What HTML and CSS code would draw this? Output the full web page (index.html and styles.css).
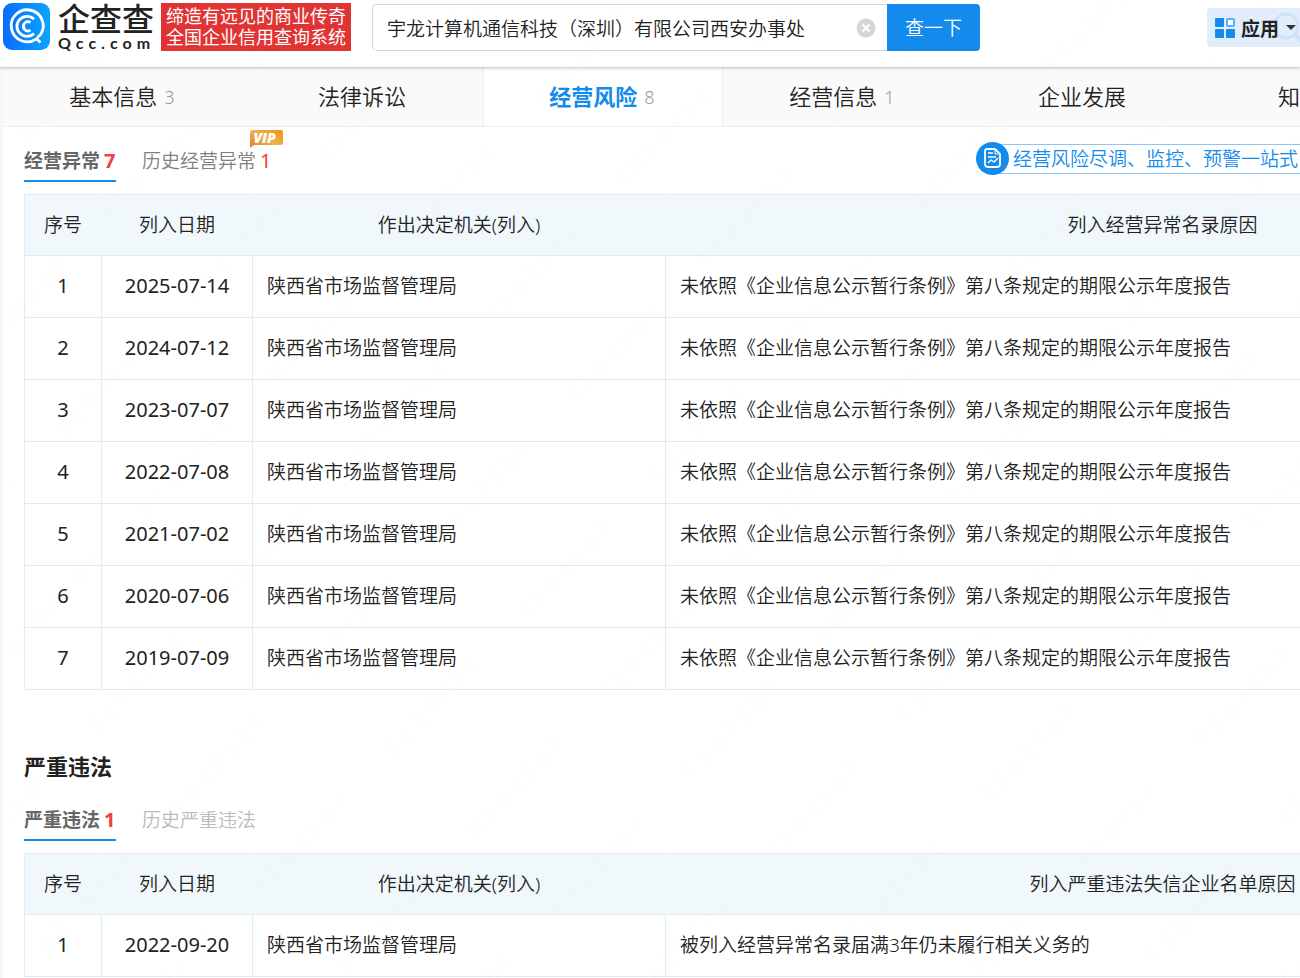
FILE: index.html
```
<!DOCTYPE html>
<html lang="zh-CN">
<head>
  <meta charset="UTF-8" />
  <meta name="viewport" content="width=device-width, initial-scale=1.0"/>
  <title>宇龙计算机通信科技（深圳）有限公司西安办事处 - 企查查</title>
  <link rel="stylesheet" href="styles.css">
</head>
<body>
  <header class="header">
    <a class="logo" href="#">
      <svg class="logo-icon" viewBox="0 0 47 47" aria-hidden="true">
        <defs>
          <linearGradient id="logoBg" x1="0" y1="0" x2="1" y2="0">
            <stop offset="0" stop-color="#0a6cff"/>
            <stop offset="1" stop-color="#0aa5ff"/>
          </linearGradient>
        </defs>
        <rect width="47" height="47" rx="9" fill="url(#logoBg)"/>
        <g fill="none" stroke="#fff" stroke-width="2.800">
          <path d="M37.500 39.500L33.500 35.800A16 16 0 1 1 37.800 31.200L34.500 34.500"/>
          <path d="M31 16.200A10 10 0 1 0 31 30.400"/>
          <path d="M27.500 19.500A4.600 4.600 0 1 0 27.500 27.200"/>
        </g>
      </svg>
      <span class="logo-text">
        <span class="logo-cn">企查查</span>
        <span class="logo-en">Qcc.com</span>
      </span>
    </a>
    <div class="slogan">缔造有远见的商业传奇<br>全国企业信用查询系统</div>

    <form class="search">
      <div class="search-box">
        <input type="text" aria-label="搜索企业" value="宇龙计算机通信科技（深圳）有限公司西安办事处">
        <button type="button" class="clear" aria-label="清空">
          <svg viewBox="0 0 20 20"><circle cx="10" cy="10" r="9.500" fill="#d6d6d6"/><path d="M6.500 6.500l7 7M13.500 6.500l-7 7" stroke="#fff" stroke-width="2"/></svg>
        </button>
      </div>
      <button type="button" class="search-btn">查一下</button>
    </form>

    <button type="button" class="apps">
      <svg class="apps-search" viewBox="0 0 32 32" aria-hidden="true"><circle cx="14" cy="14" r="12" fill="none" stroke="#cfe2fa" stroke-width="3"/><path d="M22 22l8 8" stroke="#cfe2fa" stroke-width="4"/></svg>
      <svg class="apps-icon" viewBox="0 0 20 20" aria-hidden="true">
        <g fill="#128bed">
          <rect width="9" height="9" rx="1"/>
          <rect y="11" width="9" height="9" rx="1"/>
          <rect x="11" y="11" width="9" height="9" rx="1"/>
        </g>
        <rect x="12" y="1" width="7" height="7" rx="1" fill="#fff" stroke="#5aaef2" stroke-width="2"/>
      </svg>
      <span>应用</span>
      <svg class="caret" viewBox="0 0 10 6" aria-hidden="true"><path d="M0 0h10L5 5z" fill="#333"/></svg>
    </button>
  </header>

  <main class="page">
    <nav class="tabs">
      <a href="#">基本信息<em>3</em></a>
      <a href="#">法律诉讼</a>
      <a href="#" class="active">经营风险<em>8</em></a>
      <a href="#">经营信息<em>1</em></a>
      <a href="#">企业发展</a>
      <a href="#">知识产权</a>
    </nav>

    <section class="panel">
      <div class="sub-tabs">
        <a href="#" class="current">经营异常<b>7</b></a>
        <a href="#">历史经营异常<b>1</b>
          <span class="vip">
            <svg viewBox="0 0 34 18" aria-hidden="true">
              <defs>
                <linearGradient id="vipBg" x1="0" y1="1" x2="1" y2="0">
                  <stop offset="0" stop-color="#d9822b"/>
                  <stop offset="0.5" stop-color="#efb04f"/>
                  <stop offset="1" stop-color="#eb9612"/>
                </linearGradient>
              </defs>
              <path d="M3 0H31Q33 0 33 2V13Q33 15 31 15H4L0 18V3Q0 0 3 0Z" fill="url(#vipBg)"/>
            </svg>
            <i>VIP</i>
          </span>
        </a>
        <a href="#" class="promo">
          <svg viewBox="0 0 33 33" aria-hidden="true">
            <circle cx="16.500" cy="16.500" r="16.500" fill="#128bed"/>
            <g fill="none" stroke="#fff" stroke-width="1.800" stroke-linejoin="round">
              <path d="M11 7H19L24 12V22Q24 25 21 25H12Q9 25 9 22V9Q9 7 11 7Z"/>
              <path d="M12 11h5M12 15h8M12 21l3-3 3 2 4-4" stroke-width="1.500"/>
              <path d="M19 7v5h5" stroke-width="1"/>
            </g>
          </svg>
          <span>经营风险尽调、监控、预警一站式</span>
        </a>
      </div>

      <table>
        <colgroup><col class="col-no"><col class="col-date"><col class="col-org"><col></colgroup>
        <thead>
          <tr><th>序号</th><th>列入日期</th><th>作出决定机关(列入)</th><th>列入经营异常名录原因</th></tr>
        </thead>
        <tbody>
          <tr><td>1</td><td>2025-07-14</td><td>陕西省市场监督管理局</td><td>未依照《企业信息公示暂行条例》第八条规定的期限公示年度报告</td></tr>
          <tr><td>2</td><td>2024-07-12</td><td>陕西省市场监督管理局</td><td>未依照《企业信息公示暂行条例》第八条规定的期限公示年度报告</td></tr>
          <tr><td>3</td><td>2023-07-07</td><td>陕西省市场监督管理局</td><td>未依照《企业信息公示暂行条例》第八条规定的期限公示年度报告</td></tr>
          <tr><td>4</td><td>2022-07-08</td><td>陕西省市场监督管理局</td><td>未依照《企业信息公示暂行条例》第八条规定的期限公示年度报告</td></tr>
          <tr><td>5</td><td>2021-07-02</td><td>陕西省市场监督管理局</td><td>未依照《企业信息公示暂行条例》第八条规定的期限公示年度报告</td></tr>
          <tr><td>6</td><td>2020-07-06</td><td>陕西省市场监督管理局</td><td>未依照《企业信息公示暂行条例》第八条规定的期限公示年度报告</td></tr>
          <tr><td>7</td><td>2019-07-09</td><td>陕西省市场监督管理局</td><td>未依照《企业信息公示暂行条例》第八条规定的期限公示年度报告</td></tr>
        </tbody>
      </table>
    </section>

    <section class="panel">
      <h2>严重违法</h2>
      <div class="sub-tabs">
        <a href="#" class="current">严重违法<b>1</b></a>
        <a href="#" class="disabled">历史严重违法</a>
      </div>

      <table>
        <colgroup><col class="col-no"><col class="col-date"><col class="col-org"><col></colgroup>
        <thead>
          <tr><th>序号</th><th>列入日期</th><th>作出决定机关(列入)</th><th>列入严重违法失信企业名单原因</th></tr>
        </thead>
        <tbody>
          <tr><td>1</td><td>2022-09-20</td><td>陕西省市场监督管理局</td><td>被列入经营异常名录届满3年仍未履行相关义务的</td></tr>
        </tbody>
      </table>
    </section>
  </main>

  <!-- watermark -->
  <svg class="watermark" aria-hidden="true">
    <defs>
      <pattern id="mark" width="190" height="115" patternUnits="userSpaceOnUse" patternTransform="translate(370 738) rotate(-46)">
        <text x="4" y="30">E&ensp;E&ensp;6&ensp;3&ensp;F&ensp;0&ensp;F</text>
      </pattern>
    </defs>
    <rect width="100%" height="100%" fill="url(#mark)"/>
  </svg>
</body>
</html>
```
FILE: styles.css
```
* {
  box-sizing: border-box;
}
body {
  margin: 0;
  font-family: "Noto Sans", "Noto Sans CJK SC", sans-serif;
  font-size: 19px;
  font-weight: 350;
  color: #222;
  background: #f7f7f7;
  overflow-x: hidden;
}
a {
  color: inherit;
  text-decoration: none;
}
em, i {
  font-style: normal;
}
button, input {
  font: inherit;
  color: inherit;
}
svg {
  display: block;
}

/* header */
.header {
  position: relative;
  z-index: 1;
  display: flex;
  align-items: flex-start;
  height: 67px;
  padding: 3px 0 0 3px;
  background: #fff;
  box-shadow: 0 1px 3px rgba(0, 0, 0, 0.25);
}
.logo {
  display: flex;
  gap: 8px;
  width: 158px;
}
.logo-icon {
  width: 47px;
  height: 47px;
}
.logo-text {
  display: flex;
  flex-direction: column;
  color: #222;
}
.logo-cn {
  font-size: 32px;
  line-height: 32px;
  font-weight: 500;
}
.logo-en {
  font-family: Lato, sans-serif;
  font-size: 16px;
  line-height: 16px;
  font-weight: 700;
  letter-spacing: 5px;
}
.slogan {
  width: 190px;
  height: 48px;
  padding-top: 3px;
  font-size: 18px;
  line-height: 21px;
  font-weight: 400;
  text-align: center;
  color: #fff;
  background: #e03434;
}
.search {
  display: flex;
  width: 608px;
  height: 47px;
  margin: 1px 0 0 21px;
}
.search-box {
  display: flex;
  flex: 1;
  align-items: center;
  padding: 0 11px 0 14px;
  border: 1px solid #d6d6d6;
  border-right: 0;
  border-radius: 5px 0 0 5px;
}
.search-box input {
  flex: 1;
  min-width: 0;
  padding: 0;
  border: 0;
  outline: 0;
  background: none;
}
.clear {
  padding: 0;
  border: 0;
  background: none;
}
.clear svg {
  width: 20px;
  height: 20px;
}
.search-btn {
  width: 93px;
  padding: 0 0 2px;
  border: 0;
  border-radius: 0 4px 4px 0;
  color: #fff;
  background: #128bed;
}
.apps {
  position: relative;
  z-index: 0;
  display: flex;
  align-items: center;
  gap: 6px;
  height: 39px;
  margin: 5px 0 0 auto;
  padding: 0 4px 0 8px;
  border: 0;
  border-radius: 4px 0 0 4px;
  font-weight: 700;
  background: #e2edfc;
}
.apps span {
  padding-right: 1px;
}
.apps-icon {
  width: 20px;
  height: 20px;
}
.caret {
  width: 10px;
  height: 6px;
}
.apps-search {
  position: absolute;
  z-index: -1;
  top: 4px;
  right: -4px;
  width: 32px;
  height: 32px;
}

/* content is wider than small windows and runs off to the right */
.page {
  min-width: 1657px;
  margin-left: 3px;
  padding-bottom: 1px;
  background: #fff;
}
.tabs {
  display: flex;
  height: 60px;
  border-bottom: 1px solid #eee;
  background: #fafafa;
}
.tabs a {
  display: flex;
  flex: 0 0 240px;
  align-items: center;
  justify-content: center;
  gap: 7px;
  padding: 0 2px 4px 0;
  font-size: 22px;
}
.tabs em {
  padding-top: 4px;
  font-size: 18px;
  color: #999;
}
.tabs .active {
  font-weight: 700;
  color: #128bed;
  border: solid #eee;
  border-width: 0 1px;
  background: #fff;
}
.tabs .active em {
  font-weight: 350;
}

.panel {
  padding-left: 21px;
}
.panel + .panel {
  padding-top: 58px;
}
h2 {
  margin: 0 0 2px;
  font-size: 22px;
  line-height: 36px;
  font-weight: 700;
}
.sub-tabs {
  display: flex;
  align-items: flex-start;
  gap: 26px;
  height: 67px;
  padding-top: 13px;
  color: #808080;
}
.sub-tabs > a {
  position: relative;
  height: 42px;
  line-height: 42px;
}
.sub-tabs b {
  margin-left: 4px;
  font-size: 20px;
  font-weight: 400;
  color: #f04040;
}
.sub-tabs .current {
  width: 92px;
  font-weight: 700;
  color: #666;
  border-bottom: 2px solid #128bed;
}
.sub-tabs .current b {
  font-weight: 700;
}
.sub-tabs .disabled {
  color: #bbb;
}
.vip {
  position: absolute;
  top: -10px;
  right: -13px;
  width: 34px;
  height: 18px;
}
.vip i {
  position: absolute;
  top: 0;
  left: 3px;
  font: italic 800 14px/15px "Open Sans", sans-serif;
  color: #fff;
}
.sub-tabs .promo {
  display: flex;
  align-items: center;
  width: 684px;
  height: 33px;
  margin: 2px 0 0 auto;
  line-height: 28px;
  color: #128bed;
}
.promo svg {
  position: relative;
  z-index: 1;
  flex: none;
  width: 33px;
  height: 33px;
}
.promo span {
  flex: 1;
  margin-left: -10px;
  padding-left: 14px;
  border: solid #8cc5f6;
  border-width: 1px 0;
}

table {
  width: 100%;
  table-layout: fixed;
  border-collapse: collapse;
}
.col-no {
  width: 77px;
}
.col-date {
  width: 151px;
}
.col-org {
  width: 413px;
}
th, td {
  height: 62px;
  padding: 0 14px 2px;
  border: 1px solid #e0ecf5;
  line-height: 28px;
  text-align: left;
}
th {
  height: 61px;
  padding-bottom: 0;
  font-weight: 350;
  text-align: center;
  border-left-color: #f0f8fc;
  border-right-color: #f0f8fc;
  background: #f0f8fc;
}
th:first-child {
  border-left-color: #e0ecf5;
}
td:nth-child(-n+2) {
  padding: 0 0 2px;
  font-size: 20px;
  font-weight: 400;
  text-align: center;
}

.watermark {
  position: fixed;
  top: 0;
  left: 0;
  z-index: 2;
  width: 100%;
  height: 100%;
  pointer-events: none;
}
.watermark text {
  font-size: 18px;
  font-weight: 400;
  fill: rgba(0, 0, 0, 0.012);
}
```
